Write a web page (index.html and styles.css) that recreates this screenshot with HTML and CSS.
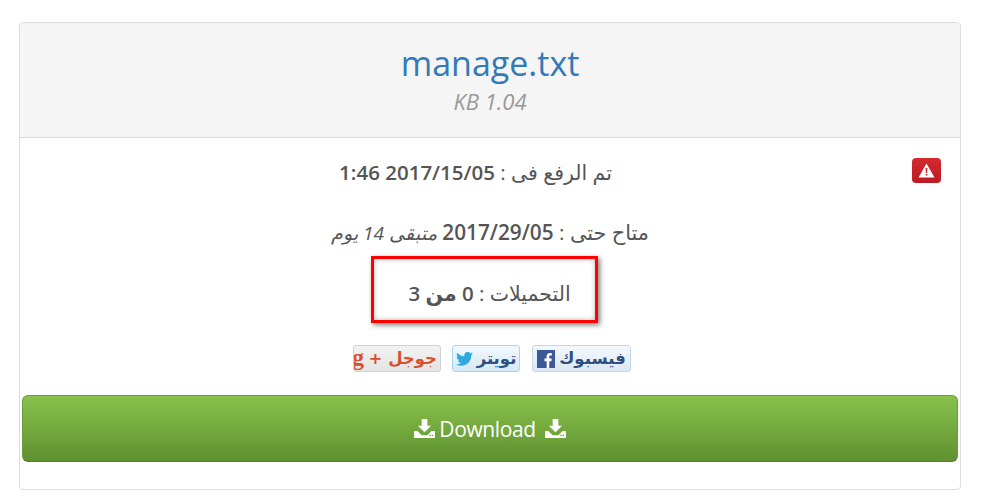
FILE: index.html
```html
<!DOCTYPE html>
<html lang="ar" dir="rtl">

<head>
    <meta charset="UTF-8">
    <title>manage.txt</title>
    <link rel="stylesheet" href="styles.css">
</head>

<body>
    <div class="card">
        <div class="card-head">
            <h1 class="file-name" dir="ltr">manage.txt</h1>
            <div class="file-size">1.04 KB</div>
        </div>

        <div class="card-body">
            <a class="report" href="#" aria-label="report">
                <svg width="17" height="15" viewBox="0 0 17 15">
                    <path d="M8.5 0.5 L16.5 14.5 H0.5 Z" fill="#fff" />
                    <path d="M7.6 5 H9.4 L9.1 10 H7.9 Z M7.7 11 H9.3 V12.6 H7.7 Z" fill="#c9232a" />
                </svg>
            </a>

            <p class="row row-first">تم الرفع فى : <b>2017/15/05 1:46</b></p>
            <p class="row row-second">متاح حتى : <b>2017/29/05</b> <i>متبقى 14 يوم</i></p>
            <div class="row row-marked">التحميلات : <b>0 من 3</b></div>

            <div class="share">
                <a class="share-btn share-fb" href="#">
                    <span>فيسبوك</span>
                    <svg width="18" height="18" viewBox="0 0 20 20">
                        <rect width="20" height="20" fill="#3b5998" />
                        <path d="M13.6 20 V12.4 H16 L16.4 9.4 H13.6 V7.6 C13.6 6.7 13.9 6.2 15 6.2 H16.5 V3.5 C16.2 3.5 15.4 3.4 14.4 3.4 C12.2 3.4 10.7 4.7 10.7 7.2 V9.4 H8.3 V12.4 H10.7 V20 Z" fill="#fff" />
                    </svg>
                </a>
                <a class="share-btn share-tw" href="#">
                    <span>تويتر</span>
                    <svg width="17" height="14" viewBox="0 0 24 20">
                        <path d="M24 2.4 C23.1 2.8 22.2 3.1 21.2 3.2 C22.2 2.6 23 1.6 23.4 0.5 C22.4 1.1 21.3 1.5 20.2 1.7 C19.3 0.7 18 0 16.6 0 C13.4 0 11.1 3 11.8 6.1 C7.7 5.9 4.1 3.9 1.7 0.9 C0.4 3.1 1 6 3.2 7.5 C2.4 7.5 1.6 7.2 1 6.9 C0.9 9.2 2.6 11.4 4.9 11.9 C4.2 12.1 3.4 12.1 2.7 12 C3.3 14 5.2 15.4 7.3 15.4 C5.2 17 2.6 17.8 0 17.5 C2.2 18.9 4.8 19.7 7.5 19.7 C16.6 19.7 21.8 12 21.5 5 C22.5 4.3 23.3 3.4 24 2.4 Z" fill="#2fa8e0" />
                    </svg>
                </a>
                <a class="share-btn share-gp" href="#">
                    <span>جوجل +</span>
                    <span class="g-mark" dir="ltr">g</span>
                </a>
            </div>

            <a class="download" href="#" dir="ltr">
                <svg class="dl-icon" width="21" height="19" viewBox="0 0 22 20">
                    <path d="M8 0 H14 V7 H18 L11 14 L4 7 H8 Z" fill="#fff" />
                    <path d="M0 12.5 H3.5 L8 17 H14 L18.5 12.5 H22 V20 H0 Z" fill="#fff" />
                    <rect x="16" y="16.5" width="1.5" height="1.5" fill="#74a83f" />
                    <rect x="18.5" y="16.5" width="1.5" height="1.5" fill="#74a83f" />
                </svg>
                <span class="dl-text">Download</span>
                <svg class="dl-icon" width="21" height="19" viewBox="0 0 22 20">
                    <path d="M8 0 H14 V7 H18 L11 14 L4 7 H8 Z" fill="#fff" />
                    <path d="M0 12.5 H3.5 L8 17 H14 L18.5 12.5 H22 V20 H0 Z" fill="#fff" />
                    <rect x="16" y="16.5" width="1.5" height="1.5" fill="#74a83f" />
                    <rect x="18.5" y="16.5" width="1.5" height="1.5" fill="#74a83f" />
                </svg>
            </a>
        </div>
    </div>
</body>

</html>
```

FILE: styles.css
```css
body {
    margin: 0;
    padding: 22px 23px 0 19px;
    background: #fff;
    color: #555;
    font-family: "Open Sans", "DejaVu Sans", sans-serif;
    font-size: 20.5px;
}

.card {
    border: 1px solid #ddd;
    border-radius: 4px;
    height: 466px;
}

.card-head {
    height: 114px;
    background: #f5f5f5;
    border-bottom: 1px solid #ddd;
    border-radius: 4px 4px 0 0;
    text-align: center;
}

.file-name {
    margin: 0;
    padding-top: 18px;
    font-size: 34px;
    font-weight: 400;
    line-height: 44px;
    color: #337ab7;
}

.file-size {
    margin-top: 1px;
    font-size: 22px;
    font-style: italic;
    line-height: 30px;
    color: #999;
}

.card-body {
    padding: 20px 2px 0;
    text-align: center;
}

.report {
    float: right;
    width: 29px;
    height: 25px;
    margin: 0 17px 0 0;
    display: flex;
    align-items: center;
    justify-content: center;
    background: linear-gradient(#d42a30, #bb1c22);
    border-radius: 4px;
}

.row {
    margin: 0;
    height: 25px;
    line-height: 25px;
}

.row-first {
    margin: 2px 0 35px;
    padding-left: 17px;
}

.row-second {
    margin-bottom: 11px;
    clear: both;
    font-size: 20.8px;
}

.row b {
    font-weight: 600;
}

.row i {
    font-size: 19px;
}

.row-marked {
    box-sizing: border-box;
    width: 227px;
    height: 67px;
    padding-left: 10px;
    line-height: 69px;
    margin: 0 360px 22px auto;
    border: 3px solid #f00;
    box-shadow: 2px 2px 5px rgba(0, 0, 0, 0.5), inset 0 0 5px rgba(0, 0, 0, 0.3);
}

.share {
    display: flex;
    justify-content: center;
    gap: 11px;
    height: 27px;
    padding-left: 4px;
    margin-bottom: 23px;
}

.share-btn {
    box-sizing: border-box;
    display: flex;
    align-items: center;
    justify-content: center;
    gap: 4px;
    height: 27px;
    border: 1px solid #c5d7ea;
    border-radius: 3px;
    background: linear-gradient(#f4f8fc, #dbe7f4);
    font-family: "DejaVu Sans", sans-serif;
    font-size: 16.5px;
    font-weight: 700;
    color: #2f4f80;
    text-decoration: none;
    overflow: hidden;
}

.share-fb {
    width: 99px;
    margin-left: 1px;
}

.share-tw {
    width: 68px;
    border-color: #a6d5ee;
    background: linear-gradient(#f2f9fd, #d5e8f5);
}

.share-gp {
    width: 88px;
    padding-right: 3px;
    border-color: #d0d0d0;
    background: linear-gradient(#f2f2f2, #e4e4e4);
    color: #d5512f;
    justify-content: flex-start;
}

.g-mark {
    margin-right: auto;
    margin-left: -2px;
    margin-top: -4px;
    font-family: "Liberation Serif", serif;
    font-size: 24px;
    line-height: 22px;
}

.download {
    display: flex;
    align-items: center;
    justify-content: center;
    gap: 4px;
    height: 65px;
    border: 1px solid #6b9a3a;
    border-bottom-color: #55802b;
    border-radius: 6px;
    background: linear-gradient(#89c14c, #5f9130);
    color: #fff;
    font-size: 21px;
    letter-spacing: -0.4px;
    text-decoration: none;
}

.dl-text {
    margin-right: 5px;
}
```
